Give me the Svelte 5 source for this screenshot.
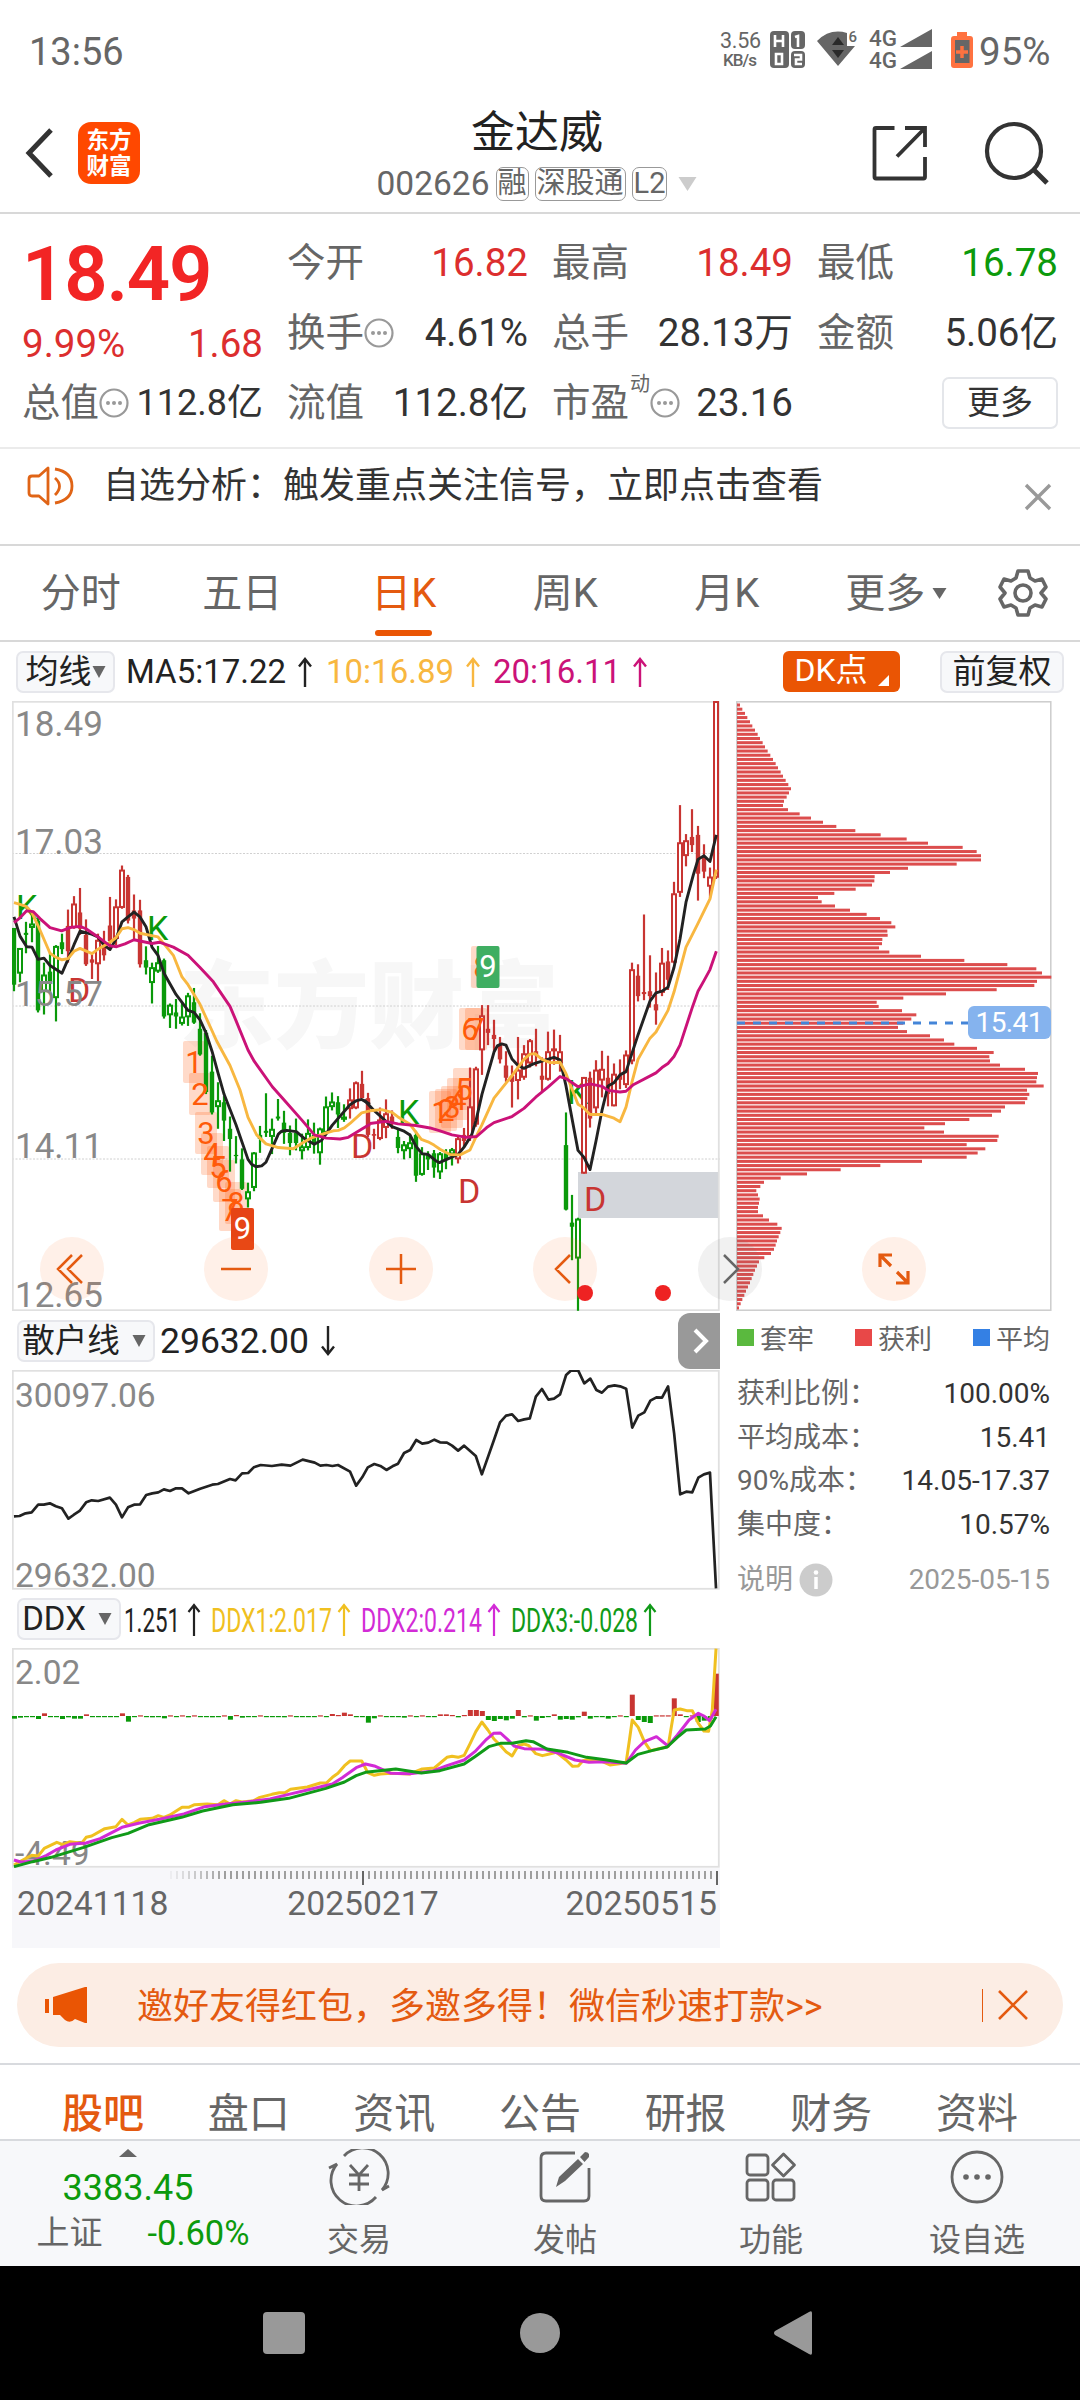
<script>
  // [high, low, bodyTop, bodyBottom, kind]  upper case = filled body, lower case = hollow
  const candles = [
    [583,738,583,722,'G'],[632,716,632,695,'g'],[568,645,595,600,'G'],[545,618,572,583,'g'],[556,790,565,785,'G'],
    [668,795,697,740,'g'],[644,740,690,715,'G'],[625,812,627,755,'g'],[597,647,618,635,'G'],[538,668,578,640,'R'],
    [505,585,523,583,'r'],[485,600,545,585,'R'],[562,676,600,672,'R'],[648,708,660,668,'R'],[597,713,612,672,'r'],
    [590,663,620,650,'R'],[507,635,577,615,'R'],[513,625,530,610,'r'],[430,536,440,534,'r'],[453,572,458,565,'R'],
    [501,612,540,560,'R'],[514,680,540,672,'R'],[628,697,662,680,'G'],[668,768,679,718,'g'],[627,693,667,690,'g'],
    [658,805,662,800,'G'],[768,828,771,797,'g'],[757,830,790,800,'G'],[765,822,800,818,'g'],[742,823,748,802,'g'],
    [730,818,765,815,'G'],[792,896,830,893,'G'],[833,990,840,985,'G'],[896,1040,935,1035,'G'],[961,1075,1005,1022,'g'],
    [995,1105,1010,1055,'G'],[1045,1180,1075,1100,'G'],[1093,1160,1139,1142,'G'],[1123,1225,1150,1222,'G'],[1207,1268,1228,1248,'g'],
    [1132,1228,1133,1220,'g'],[1068,1134,1090,1100,'G'],[988,1095,1080,1085,'G'],[1050,1137,1075,1095,'g'],[1002,1055,1045,1050,'G'],
    [1031,1112,1060,1085,'G'],[1067,1140,1085,1110,'G'],[1050,1128,1085,1110,'G'],[1087,1150,1118,1130,'g'],[1052,1128,1085,1122,'g'],
    [1060,1136,1090,1110,'G'],[1072,1163,1074,1135,'g'],[996,1090,1020,1085,'g'],[986,1030,1008,1022,'g'],[995,1073,1010,1040,'G'],
    [1015,1058,1045,1053,'g'],[976,1050,1003,1027,'r'],[959,1027,961,1025,'r'],[933,1000,965,1000,'R'],[987,1095,1000,1090,'R'],
    [1075,1125,1088,1092,'R'],[1023,1103,1052,1100,'r'],[1003,1098,1037,1073,'r'],[1030,1075,1045,1060,'R'],[1073,1135,1095,1122,'G'],
    [1105,1150,1113,1130,'g'],[1087,1147,1108,1125,'g'],[1080,1205,1090,1190,'G'],[1120,1190,1135,1188,'g'],[1130,1176,1140,1150,'G'],
    [1127,1195,1135,1170,'G'],[1132,1198,1135,1182,'g'],[1125,1174,1135,1150,'G'],[1122,1165,1125,1138,'g'],[1095,1160,1098,1150,'r'],
    [1073,1118,1090,1105,'R'],[925,1105,1020,1095,'r'],[923,1070,927,1065,'r'],[772,943,797,883,'r'],[772,870,830,840,'R'],
    [808,885,845,855,'R'],[850,915,868,905,'R'],[885,960,920,950,'R'],[920,1023,945,960,'R'],[850,1003,930,958,'r'],
    [870,955,890,950,'r'],[855,925,858,915,'r'],[830,922,885,895,'R'],[900,985,945,955,'R'],[837,957,885,955,'r'],
    [832,918,878,885,'r'],[845,935,885,915,'r'],[1035,1275,1115,1273,'G'],[1237,1397,1305,1315,'G'],[1293,1521,1295,1393,'g'],
    [948,1185,948,1185,'r'],[935,1072,950,1050,'R'],[907,1038,930,1025,'r'],[884,998,928,957,'r'],[896,1020,950,990,'R'],
    [915,1020,940,1020,'r'],[905,978,945,955,'R'],[883,975,893,968,'r'],[668,917,684,910,'r'],[672,763,700,750,'R'],
    [550,760,740,745,'R'],[650,778,738,750,'R'],[692,820,770,785,'R'],[632,750,668,742,'r'],[638,735,665,710,'R'],
    [470,670,498,668,'r'],[282,507,373,497,'r'],[353,432,368,407,'r'],[292,397,360,380,'R'],[333,516,355,450,'R'],
    [378,461,410,445,'R'],[435,510,457,482,'r'],[27,463,27,460,'r']
  ];
  const cy = (v) => v / 2.45 - 11;
  const color = (k) => (k.toLowerCase() === 'g' ? '#0a990a' : '#c83532');

  // moving averages, each split in an early and a late half
  const averages = [
    {
      color: '#222',
      early: '42,556 60,603 80,629 96,630 114,660 132,657 150,675 186,694 204,660 222,624 240,591 275,598 294,605 312,625 330,636 348,610 366,568 384,556 402,544 420,556 438,580 456,630 474,650 492,694 528,746 564,785 582,790 600,808 618,840 636,885 654,938 672,990 708,1065 744,1150 755,1162 768,1168 785,1166 798,1157 817,1122 835,1088 845,1081 860,1079 889,1082 918,1102 943,1113 965,1103 997,1066 1050,1016 1070,1006 1085,1003 1110,1015',
      late: '12,1004 42,1030 96,1070 130,1080 150,1090 168,1118 186,1136 204,1138 225,1152 238,1158 260,1150 294,1138 312,1120 335,1090 348,1055 366,990 402,887 412,872 425,867 438,870 456,904 474,920 492,927 520,916 546,909 582,900 600,906 618,970 636,1050 654,1128 672,1145 690,1175 708,1105 726,1030 744,970 762,962 780,943 798,935 834,845 870,762 888,742 906,738 924,728 942,680 960,610 978,520 1000,453 1014,415 1032,406 1050,420 1069,355'
    },
    {
      color: '#f8b740',
      early: '42,521 60,525 78,530 96,546 114,577 150,645 168,655 186,661 204,658 222,640 240,633 276,646 294,635 330,618 348,607 366,585 384,582 402,587 420,596 474,605 492,622 520,650 546,703 564,722 600,770 650,860 690,920 720,980 744,1047 770,1090 798,1112 835,1121 880,1124 907,1110 935,1097 979,1085 1000,1080 1015,1079 1033,1073 1050,1062 1085,1036 1110,1031',
      late: '30,1031 65,1028 96,1035 114,1046 150,1064 184,1101 204,1107 222,1115 240,1125 270,1138 300,1139 330,1127 348,1095 366,1065 402,1000 438,963 456,945 492,905 510,892 525,891 546,905 570,913 600,912 618,940 654,1015 670,1023 690,1040 726,1040 762,1049 780,1058 798,1022 816,960 834,905 870,853 888,838 924,785 942,740 978,630 1014,572 1050,512 1069,440'
    },
    {
      color: '#cb1278',
      early: '42,570 60,558 80,541 100,543 120,560 150,582 185,590 210,582 240,579 258,585 294,605 330,627 350,629 375,622 402,612 456,621 478,618 520,630 564,650 600,680 640,715 690,775 708,810 744,882 763,910 817,972 853,1005 907,1055 943,1090 979,1098 1020,1100 1045,1096 1087,1075 1110,1064',
      late: '30,1062 78,1057 114,1063 168,1067 210,1073 240,1080 276,1090 320,1096 350,1094 380,1072 402,1060 456,1045 492,1025 528,997 564,973 600,947 620,953 654,972 690,965 726,971 744,981 780,985 798,983 820,967 888,938 906,925 924,915 942,898 960,870 996,780 1014,738 1032,712 1050,685 1069,640'
    }
  ];

  // nine-turn marks: [x, y, digit]
  const marks = [
    [171,340,1],[177,372,2],[183,411,3],[189,432,4],[195,445,5],[201,459,6],[207,488,7],[213,481,8],
    [417,390,1],[423,388,2],[429,385,3],[435,377,4],[441,367,5],[447,307,6],[453,307,7],[459,245,8]
  ];
  const letters = [
    ['K',4,218],['D',56,301],['K',135,239],['D',339,457],['K',386,423],['D',446,502],['K',555,403],['D',572,510]
  ];
  const prices = [['18.49',35],['17.03',152.5],['15.57',305],['14.11',457],['12.65',606]];

  // chip distribution, right end of every bar
  const chips = [
    60,67,75,82,90,97,105,113,120,128,135,143,151,159,167,174,182,189,197,205,213,207,200,192,189,204,239,273,309,349,
    406,482,560,624,728,770,783,783,710,564,510,464,463,456,407,343,294,305,345,390,440,480,514,526,502,503,487,486,477,508,
    603,733,862,949,966,994,951,943,830,678,550,470,476,546,589,574,550,534,561,630,672,703,771,821,808,810,840,915,954,951,
    949,971,921,928,922,915,855,843,816,748,675,613,672,836,832,740,796,773,740,606,481,362,261,182,132,121,109,114,119,117,
    114,114,129,147,172,185,181,176,171,167,162,153,133,117,111,105,100,95,90,84,78,73,67,62,57
  ];

  const retail = '30,649 42,648 55,640 68,637 82,614 94,614 107,610 120,619 133,625 147,656 158,645 171,633 185,607 197,601 211,603 236,593 249,614 262,652 275,622 288,614 301,613 314,585 327,580 340,577 352,568 365,573 378,565 391,565 405,580 430,566 456,554 468,552 494,537 506,541 520,520 533,519 545,502 560,495 584,498 605,494 624,497 650,479 676,488 688,497 701,495 714,498 726,495 752,515 765,557 778,532 790,502 804,492 817,498 830,510 843,499 855,491 868,459 881,450 894,420 907,431 920,428 933,419 945,427 960,428 971,437 984,452 997,437 1022,468 1035,523 1061,420 1074,367 1087,347 1100,343 1113,363 1126,358 1138,355 1151,290 1164,267 1178,299 1190,296 1203,283 1216,225 1226,212 1242,212 1255,250 1268,236 1281,270 1293,278 1306,260 1320,256 1332,259 1345,266 1358,383 1371,347 1384,337 1397,302 1410,292 1422,293 1435,259 1448,400 1461,583 1474,575 1487,577 1500,533 1512,523 1525,518 1538,865';

  const ddxBars = [
    -8,-5,-3,-3,-9,8,-3,-3,-9,-4,-8,-8,5,-3,-3,-3,-3,-3,8,-17,-3,2,-3,-4,-3,-7,2,-3,2,-4,2,-3,-3,-4,-3,2,-11,3,-5,-3,
    -3,2,-3,-3,-3,-4,2,-3,-3,-3,-3,2,-3,6,3,10,5,-3,-3,-20,-7,2,-3,-3,-3,-5,2,-3,2,-3,-3,5,5,3,-4,3,18,18,15,-12,
    -15,-9,-13,-8,18,-4,2,-14,-6,-3,5,-11,-9,-11,-4,13,-8,-3,-3,-8,-3,2,-2,64,-12,-18,-21,2,2,2,53,5,-3,2,-18,-14,-8,127
  ];
  const ddxLines = [
    ['#f0c020', '30,795 45,783 68,766 82,768 95,745 122,727 135,734 150,725 175,730 185,712 197,708 225,686 249,680 262,658 275,675 288,668 301,658 327,655 340,647 352,652 365,645 391,622 405,622 418,614 445,612 468,614 481,602 494,612 507,602 520,606 545,602 558,592 584,583 600,578 612,578 624,568 660,561 688,549 701,549 714,532 726,520 740,497 752,483 777,483 790,518 804,526 817,522 840,520 880,522 907,507 933,504 960,472 971,469 984,472 997,466 1010,430 1022,395 1035,366 1048,390 1061,417 1074,435 1087,455 1100,468 1113,437 1126,432 1136,437 1151,461 1165,467 1180,462 1195,457 1216,480 1230,499 1242,498 1252,482 1268,478 1293,484 1310,495 1330,491 1345,487 1352,420 1358,360 1371,382 1384,425 1397,452 1420,445 1435,440 1448,330 1461,327 1475,332 1487,332 1500,370 1512,393 1522,394 1530,330 1538,146'],
    ['#d22bd6', '30,780 45,786 70,784 100,766 120,750 150,733 185,729 215,716 262,682 300,669 345,657 395,642 440,620 480,613 530,606 580,597 620,583 660,570 714,552 735,533 765,503 785,492 804,498 840,520 880,521 930,513 960,497 997,480 1020,455 1045,418 1060,400 1075,399 1090,418 1104,438 1126,446 1170,448 1200,460 1235,480 1265,487 1300,485 1345,490 1365,450 1384,425 1410,410 1435,438 1455,405 1480,360 1500,340 1512,348 1524,362 1538,328'],
    ['#109a18', '30,800 70,785 110,772 180,742 240,713 275,700 320,674 390,652 435,633 500,614 560,607 620,595 700,565 740,546 765,527 785,517 850,507 905,519 945,512 997,492 1020,470 1050,440 1075,430 1100,430 1130,422 1145,425 1175,447 1220,457 1260,472 1300,479 1345,489 1370,463 1400,452 1433,441 1455,412 1474,390 1515,387 1526,378 1538,350']
  ];
  const ticks = Array.from({ length: 92 }, (_, i) => 159 + i * 6);

  const stats = [
    ['获利比例：', '100.00%'],
    ['平均成本：', '15.41'],
    ['90%成本：', '14.05-17.37'],
    ['集中度：', '10.57%']
  ];
  const sections = ['股吧', '盘口', '资讯', '公告', '研报', '财务', '资料'];
</script>

{#snippet arrow(down)}
  <svg class="arrow" class:down width="16" height="32" viewBox="0 0 16 32"><path d="M8 31V3M2 10.500L8 3L14 10.500" fill="none" stroke="currentColor" stroke-width="2.400" /></svg>
{/snippet}

{#snippet more()}
  <svg class="more" width="30" height="30" viewBox="0 0 30 30"><circle cx="15" cy="15" r="13.500" fill="none" stroke="#999" stroke-width="2.200" /><circle cx="9" cy="15" r="2" fill="#999" /><circle cx="15" cy="15" r="2" fill="#999" /><circle cx="21" cy="15" r="2" fill="#999" /></svg>
{/snippet}

<div class="page">
  <div class="status">
    <span class="clock">13:56</span>
    <svg width="340" height="50" viewBox="715 25 340 50">
      <g fill="#666">
        <text x="740.500" y="48" font-size="21.500" text-anchor="middle" textLength="41">3.56</text>
        <text x="740" y="66" font-size="17" font-weight="500" text-anchor="middle" textLength="34">KB/s</text>
        <rect x="770" y="31" width="19" height="37" rx="4" />
        <rect x="791" y="31" width="14" height="18" rx="4" />
        <rect x="791" y="51" width="14" height="17" rx="4" />
        <path d="M838 66L817 41Q830 28 847 33V46H855Z" />
        <text x="848.500" y="42" font-size="15" font-weight="500">6</text>
        <text x="869" y="45.500" font-size="21.500" font-weight="500" textLength="28" lengthAdjust="spacingAndGlyphs">4G</text>
        <text x="869" y="67.500" font-size="21.500" font-weight="500" textLength="28" lengthAdjust="spacingAndGlyphs">4G</text>
        <path d="M932 29V47H900ZM932 51V69H900Z" />
      </g>
      <g fill="none" stroke="#fff" stroke-width="2.600">
        <path d="M775 35V47M783 35V47M775 41H783M776 54V64H782V54ZM795 37L798 36V47M794 55H801V59.500H796V64H802" />
      </g>
      <path d="M832 45L838 37L844 45ZM832 50L838 58L844 50Z" fill="#2a2a2a" />
      <path d="M957 32H967V36H970Q973 36 973 39V65Q973 68 970 68H954Q951 68 951 65V39Q951 36 954 36H957Z" fill="#ff7240" />
      <rect x="955" y="40" width="14.500" height="23" fill="#666" />
      <path d="M962 46V58M956 52H968" stroke="#ff7240" stroke-width="3.500" />
      <text x="979" y="65" font-size="38.500" fill="#666">95%</text>
    </svg>
  </div>

  <header>
    <div class="side">
      <svg width="30" height="52" viewBox="0 0 30 52"><path d="M27 3L5 26L27 49" fill="none" stroke="#333" stroke-width="5" /></svg>
      <div class="logo"><span>东方</span><span>财富</span></div>
    </div>
    <div class="title">
      <h1>金达威</h1>
      <div class="code">002626<i>融</i><i>深股通</i><i>L2</i><svg width="19" height="14" viewBox="0 0 18 14"><path d="M0 0H18L9 14Z" fill="#ccc" /></svg></div>
    </div>
    <div class="side right">
      <svg width="56" height="56" viewBox="872 124 56 56"><path d="M894.500 127H876Q874.500 127 874.500 128.500V176Q874.500 177.500 876 177.500H923.500Q925 177.500 925 176V156M905 127H925V146M924 128L897 155.500" fill="none" stroke="#333" stroke-width="3.800" /></svg>
      <svg width="66" height="66" viewBox="984 118 66 66"><circle cx="1014" cy="149" r="27" fill="none" stroke="#333" stroke-width="4.200" /><path d="M1033 167L1047 181" stroke="#333" stroke-width="5" /></svg>
    </div>
  </header>

  <section class="quote">
    <div class="big">18.49</div>
    <div class="cell"><label>今开</label><b class="red">16.82</b></div>
    <div class="cell"><label>最高</label><b class="red">18.49</b></div>
    <div class="cell"><label>最低</label><b class="green">16.78</b></div>
    <div class="cell change"><b class="red">9.99%</b><b class="red">1.68</b></div>
    <div class="cell"><label>换手</label>{@render more()}<b>4.61%</b></div>
    <div class="cell"><label>总手</label><b>28.13万</b></div>
    <div class="cell"><label>金额</label><b>5.06亿</b></div>
    <div class="cell tight"><label>总值</label>{@render more()}<b>112.8亿</b></div>
    <div class="cell"><label>流值</label><b>112.8亿</b></div>
    <div class="cell"><label>市盈</label><sup>动</sup>{@render more()}<b>23.16</b></div>
    <div class="cell"><button class="more-btn">更多</button></div>
  </section>

  <div class="notice">
    <svg width="50" height="40" viewBox="0 0 50 40"><g fill="none" stroke="#e06416" stroke-width="2.800"><path d="M21 2V38L12 30H5Q2 30 2 27V13Q2 10 5 10H12Z" stroke-linejoin="round" /><path d="M28 12Q37 20 28 29M28 3Q45 6 45 20Q45 34 28 37" /></g></svg>
    <span>自选分析：触发重点关注信号，立即点击查看</span>
    <svg class="close" width="28" height="28" viewBox="0 0 28 28"><path d="M2 2L26 26M26 2L2 26" stroke="#999" stroke-width="3.400" /></svg>
  </div>

  <nav class="periods">
    <span>分时</span><span>五日</span><span class="active">日K</span><span>周K</span><span>月K</span>
    <span class="drop">更多<svg width="15" height="11" viewBox="0 0 14 11"><path d="M0 0H14L7 11Z" fill="#666" /></svg></span>
    <svg class="gear" width="50" height="50" viewBox="-25 -25 50 50"><path d="M-5 -22H5L7 -15L12 -12L19 -14L23 -6L18 0L23 6L19 14L12 12L7 15L5 22H-5L-7 15L-12 12L-19 14L-23 6L-18 0L-23 -6L-19 -14L-12 -12L-7 -15Z" fill="none" stroke="#666" stroke-width="3.600" stroke-linejoin="round" /><circle r="8" fill="none" stroke="#666" stroke-width="3.600" /></svg>
  </nav>

  <div class="ma-row">
    <button class="pill ma">均线<svg width="14" height="12" viewBox="0 0 13 12"><path d="M0 0H13L6.500 12Z" fill="#666" /></svg></button>
    <span class="ma5">MA5:17.22{@render arrow(false)}</span>
    <span class="ma10">10:16.89{@render arrow(false)}</span>
    <span class="ma20">20:16.11{@render arrow(false)}</span>
    <button class="dk"><span>DK点</span><svg width="11" height="11" viewBox="0 0 11 11"><path d="M11 0V11H0Z" fill="#fff" /></svg></button>
    <button class="pill adj">前复权</button>
  </div>

  <div class="charts">
    <div class="left">
      <svg class="kline" width="708" height="610" viewBox="0 0 708 610">
        <text class="mark" x="167" y="340">东方财富</text>
        {#each [152.500, 305, 458] as y}
          <path d="M0 {y}H708" stroke="#d0d0d0" stroke-width="1" stroke-dasharray="2 1.500" />
        {/each}
        <rect x="566" y="471" width="141" height="46" fill="#d3d6db" />
        <rect x=".8" y=".8" width="706" height="608.400" fill="none" stroke="#e0e0e0" stroke-width="1.800" />
        {#each marks as [x, y]}
          <rect x={x} y={y} width="22" height="42" rx="2" fill="#ff6a28" fill-opacity=".25" />
        {/each}
        {#each letters as [c, x, y]}
          <text x={x} y={y} font-size="34" fill={c === 'K' ? '#0a990a' : '#c83532'}>{c}</text>
        {/each}
        {#each candles as [high, low, top, bottom, kind], i}
          <path d="M{2 + i * 6} {cy(high)}V{cy(low)}" stroke={color(kind)} stroke-width="2.200" />
          {#if kind === 'g' || kind === 'r'}
            <rect x={i * 6} y={cy(top) + 1} width="4" height={Math.max(1, cy(bottom) - cy(top) - 2)} fill="#fff" stroke={color(kind)} stroke-width="2" />
          {:else}
            <rect x={i * 6 - 0.2} y={cy(top)} width="4.400" height={cy(bottom) - cy(top)} fill={color(kind)} />
          {/if}
        {/each}
        {#each prices as [p, y]}
          <text x="3" y={y} font-size="35" fill="#888">{p}</text>
        {/each}
        {#each averages as ma}
          <g fill="none" stroke={ma.color} stroke-width="2.900" stroke-linejoin="round">
            <polyline points={ma.early} transform="translate(-12 -11) scale(.33333 .40816)" />
            <polyline points={ma.late} transform="translate(348 -11) scale(.33333 .40816)" />
          </g>
        {/each}
        {#each marks as [x, y, n]}
          <text x={x + 11} y={y + 32} font-size="31" text-anchor="middle" fill="#ff5a0a">{n}</text>
        {/each}
        <rect x="219" y="507" width="23" height="42" rx="2" fill="#e64415" />
        <text x="230.500" y="538" font-size="31" text-anchor="middle" fill="#fff">9</text>
        <rect x="464.500" y="245" width="23" height="42" rx="2" fill="#3fae62" />
        <text x="476" y="276" font-size="31" text-anchor="middle" fill="#fff">9</text>
      </svg>

      <div class="ind-row">
        <button class="pill wide">散户线<svg width="14" height="12" viewBox="0 0 13 12"><path d="M0 0H13L6.500 12Z" fill="#666" /></svg></button>
        <span class="ind-value">29632.00{@render arrow(true)}</span>
        <button class="expand"><svg width="20" height="28" viewBox="0 0 20 28"><path d="M6 3L17 14L6 25" fill="none" stroke="#fff" stroke-width="4" /></svg></button>
      </div>

      <svg class="sub" width="708" height="220" viewBox="0 0 708 220">
        <rect x=".8" y=".8" width="706" height="218" fill="none" stroke="#e0e0e0" stroke-width="1.800" />
        <text x="3" y="36.500" font-size="33.500" fill="#888">30097.06</text>
        <text x="3" y="217" font-size="33.500" fill="#888">29632.00</text>
        <polyline points={retail} transform="translate(-12 -70) scale(.46556 .33333)" fill="none" stroke="#222" stroke-width="2.700" stroke-linejoin="round" />
      </svg>

      <div class="ind-row ddx">
        <button class="pill">DDX<svg width="14" height="12" viewBox="0 0 13 12"><path d="M0 0H13L6.500 12Z" fill="#666" /></svg></button>
        <svg class="values" width="560" height="44" viewBox="120 1595 560 44" font-size="34">
          <g fill="#222"><text x="124" y="1630" textLength="56" lengthAdjust="spacingAndGlyphs">1.251</text><path d="M194 1634V1603M188.500 1610L194 1603L199.500 1610" stroke="#222" /></g>
          <g fill="#f0c020"><text x="211" y="1630" textLength="121" lengthAdjust="spacingAndGlyphs">DDX1:2.017</text><path d="M344 1634V1603M338.500 1610L344 1603L349.500 1610" stroke="#f0c020" /></g>
          <g fill="#d22bd6"><text x="361" y="1630" textLength="121" lengthAdjust="spacingAndGlyphs">DDX2:0.214</text><path d="M494 1634V1603M488.500 1610L494 1603L499.500 1610" stroke="#d22bd6" /></g>
          <g fill="#109a18"><text x="511" y="1630" textLength="127" lengthAdjust="spacingAndGlyphs">DDX3:-0.028</text><path d="M650 1634V1603M644.500 1610L650 1603L655.500 1610" stroke="#109a18" /></g>
        </svg>
      </div>

      <svg class="sub" width="708" height="220" viewBox="0 0 708 220">
        <rect x=".8" y=".8" width="706" height="218" fill="none" stroke="#e0e0e0" stroke-width="1.800" />
        {#each ddxBars as v, i}
          <rect x={i * 5.998} y={v > 0 ? 68 - v / 3 : 68} width="5" height={Math.max(1.2, Math.abs(v) / 3)} fill={v > 0 ? '#c83532' : '#0a990a'} />
        {/each}
        <text x="3" y="36" font-size="33.500" fill="#888">2.02</text>
        <text x="3" y="217" font-size="33.500" fill="#888">-4.49</text>
        {#each ddxLines as [stroke, points]}
          <polyline points={points} transform="translate(-12 -48) scale(.46556 .33333)" fill="none" stroke={stroke} stroke-width="3" stroke-linejoin="round" />
        {/each}
      </svg>

      <div class="axis">
        <svg width="708" height="20" viewBox="0 0 708 20">
          {#each ticks as x, i}
            <path d="M{x} 3V11" stroke="#888" stroke-width="1.600" opacity={Math.min(1, (i + 1) / 10)} />
          {/each}
          <path d="M351 3V17M705 3V17" stroke="#666" stroke-width="2" />
        </svg>
        <div class="dates"><span>20241118</span><span>20250217</span><span>20250515</span></div>
      </div>
    </div>

    <div class="chips">
      <svg width="316" height="610" viewBox="0 0 316 610">
        <rect x=".8" y=".8" width="314" height="608.400" fill="none" stroke="#ccc" stroke-width="1.500" />
        {#each chips as c, i}
          <rect x="1" y={2.5 + i * 4.187} width={(c - 51) / 3} height="3" fill="#dc4d4d" />
        {/each}
        <path d="M1 322H232" stroke="#4485d8" stroke-width="2.800" stroke-dasharray="8 8" />
        <rect x="232" y="305" width="83" height="33" rx="6" fill="#85b3ee" />
        <text x="273.500" y="331" font-size="28" text-anchor="middle" fill="#fff" textLength="68">15.41</text>
      </svg>
      <div class="legend"><span class="lose">套牢</span><span class="win">获利</span><span class="avg">平均</span></div>
      {#each stats as [name, value]}
        <div class="stat"><span>{name}</span><b>{value}</b></div>
      {/each}
      <div class="stat note">
        <span>说明<svg width="34" height="34" viewBox="0 0 34 34"><circle cx="17" cy="17" r="16.500" fill="#ccc" /><path d="M17 14V26" stroke="#fff" stroke-width="3.500" /><circle cx="17" cy="9.500" r="2.300" fill="#fff" /></svg></span>
        <em>2025-05-15</em>
      </div>
    </div>

    <svg class="controls" width="1080" height="90" viewBox="0 1235 1080 90">
      <g fill="#ff6a20" fill-opacity=".1"><circle cx="72" cy="1269" r="32" /><circle cx="236" cy="1269" r="32" /><circle cx="401" cy="1269" r="32" /><circle cx="565" cy="1269" r="32" /><circle cx="894" cy="1269" r="32" /></g>
      <circle cx="730" cy="1269" r="32" fill="#777" fill-opacity=".1" />
      <g fill="none" stroke="#e45a10" stroke-width="2.500">
        <path d="M72 1255L58 1269L72 1283M82 1255L68 1269L82 1283M221 1269H251M386 1269H416M401 1254V1284M570 1255L556 1269L570 1283" />
        <path d="M880 1267V1255H892M880 1255L891 1266M908 1271V1283H896M908 1283L897 1272" stroke-width="3.200" />
      </g>
      <path d="M724 1255L738 1269L724 1283" fill="none" stroke="#666" stroke-width="2.500" />
      <circle cx="585" cy="1293" r="8" fill="#ee2222" />
      <circle cx="663" cy="1293" r="8" fill="#ee2222" />
    </svg>
  </div>

  <div class="promo">
    <svg width="44" height="38" viewBox="0 0 44 38"><path d="M0 13H4V27H0ZM8 11L40 1H42V37H40L30 33Q25 38 20 34L15 29H8Z" fill="#ea5504" /></svg>
    <span>邀好友得红包，多邀多得！微信秒速打款&gt;&gt;</span>
    <i></i>
    <svg width="32" height="32" viewBox="0 0 32 32"><path d="M2 2L30 30M30 2L2 30" stroke="#e45a10" stroke-width="2.600" /></svg>
  </div>

  <nav class="sections">
    {#each sections as s, i}
      <span class:active={i === 0}>{s}</span>
    {/each}
  </nav>

  <footer>
    <div class="index">
      <svg width="18" height="8" viewBox="0 0 18 8"><path d="M0 8L9 0L18 8Z" fill="#666" /></svg>
      <strong>3383.45</strong>
      <div><span>上证</span><b>-0.60%</b></div>
    </div>
    <div class="tool">
      <svg width="62" height="56" viewBox="0 0 62 56"><g fill="none" stroke="#666" stroke-width="2.800"><path d="M16 7A25.500 25.500 0 0 1 54 41L61 37M48 48A25.500 25.500 0 0 1 9 15L1 19" stroke-linejoin="bevel" /><path d="M22 16L31 26L40 16M31 26V42M21 26H41M21 35H41" /></g></svg>
      <span>交易</span>
    </div>
    <div class="tool">
      <svg width="62" height="56" viewBox="0 0 62 56"><path d="M41 4H12Q7 4 7 9V47Q7 52 12 52H50Q55 52 55 47V19" fill="none" stroke="#666" stroke-width="2.800" /><path d="M22 38L25 28L44 10L49 15L31 32ZM46 8L51 3Q54 3 55 5V8L50.500 13Z" fill="#666" /></svg>
      <span>发帖</span>
    </div>
    <div class="tool">
      <svg width="62" height="56" viewBox="0 0 62 56"><g fill="none" stroke="#666" stroke-width="2.800"><rect x="7" y="6" width="21" height="20" rx="3" /><rect x="7" y="31" width="21" height="20" rx="3" /><rect x="33" y="31" width="21" height="20" rx="3" /><path d="M43.500 5L54.500 16L43.500 27L32.500 16Z" stroke-linejoin="round" /></g></svg>
      <span>功能</span>
    </div>
    <div class="tool">
      <svg width="62" height="56" viewBox="0 0 62 56"><circle cx="31" cy="28" r="25" fill="none" stroke="#666" stroke-width="2.800" /><g fill="#666"><circle cx="20" cy="28" r="2.800" /><circle cx="31" cy="28" r="2.800" /><circle cx="42" cy="28" r="2.800" /></g></svg>
      <span>设自选</span>
    </div>
  </footer>

  <div class="system">
    <svg width="1080" height="134" viewBox="0 0 1080 134"><g fill="#999"><rect x="263" y="46" width="42" height="42" rx="4" /><circle cx="540" cy="67" r="20" /><path d="M812 47V87Q812 90 809 88L775 69Q773 67 775 65L809 46Q812 44 812 47Z" /></g></svg>
  </div>
</div>

<style>
  :global(body) {
    margin: 0;
    background: #fff;
  }

  .page {
    width: 1080px;
    height: 2400px;
    overflow: hidden;
    display: flex;
    flex-direction: column;
    font-family: Roboto, 'Noto Sans CJK SC', sans-serif;
    color: #333;
    background: #fff;
  }

  .page > * {
    flex: none;
    box-sizing: border-box;
  }

  svg {
    display: block;
    flex: none;
  }

  svg polyline {
    vector-effect: non-scaling-stroke;
  }

  button {
    font: inherit;
    color: inherit;
    padding: 0;
    box-sizing: border-box;
    display: flex;
    align-items: center;
    justify-content: center;
    white-space: nowrap;
  }

  b, em, i {
    font-weight: 400;
    font-style: normal;
  }

  .status {
    height: 104px;
    padding: 25px 25px 0 29px;
    display: flex;
    justify-content: space-between;
  }

  .clock {
    font-size: 38px;
    line-height: 54px;
    color: #666;
  }

  header {
    height: 110px;
    border-bottom: 2px solid #d8d8d8;
    padding: 0 30px 0 24px;
    display: flex;
    justify-content: space-between;
  }

  .side {
    width: 230px;
    display: flex;
    align-items: center;
    padding-bottom: 14px;
    gap: 24px;
    height: 111px;
    box-sizing: border-box;
  }

  .side.right {
    justify-content: flex-end;
    gap: 56px;
  }

  .logo {
    width: 62px;
    height: 62px;
    border-radius: 13px;
    background: #ff4800;
    color: #fff;
    font-size: 22.5px;
    font-weight: 700;
    line-height: 26px;
    display: flex;
    flex-direction: column;
    align-items: center;
    justify-content: center;
  }

  .title {
    text-align: center;
  }

  h1 {
    margin: 0;
    font-size: 44px;
    font-weight: 400;
    line-height: 58px;
    color: #222;
  }

  .code {
    display: flex;
    align-items: center;
    justify-content: center;
    font-size: 33.5px;
    line-height: 34px;
    color: #666;
    margin-top: 5px;
  }

  .code i {
    height: 32px;
    line-height: 31px;
    border: 1.5px solid #999;
    border-radius: 7px;
    font-size: 29px;
    padding: 0 1px;
    margin-left: 6px;
  }

  .code svg {
    margin-left: 11px;
  }

  .quote {
    height: 233px;
    padding: 14px 22px 0;
    display: grid;
    grid-template-columns: repeat(4, 1fr);
    grid-template-rows: repeat(3, 70px);
    column-gap: 24px;
  }

  .big {
    font-size: 76px;
    font-weight: 600;
    line-height: 92px;
    letter-spacing: -1.2px;
    color: #f22525;
  }

  .cell {
    display: flex;
    align-items: center;
    font-size: 38.5px;
    line-height: 50px;
    white-space: nowrap;
  }

  .cell label {
    color: #666;
  }

  .cell b {
    margin-left: auto;
  }

  .cell.change {
    padding-top: 22px;
  }

  .cell.change b:first-child {
    margin-left: 0;
  }

  .cell.tight b {
    font-size: 36px;
  }

  .cell sup {
    font-size: 20px;
    color: #666;
    line-height: 20px;
    margin: -38px 0 0 1px;
    vertical-align: baseline;
  }

  .cell b.red {
    color: #dc2e2e;
  }

  .cell b.green {
    color: #0c9a0c;
  }

  .more-btn {
    margin-left: auto;
    width: 116px;
    height: 52px;
    border: 2px solid #e4e6ea;
    border-radius: 7px;
    background: #fff;
    font-size: 33px;
  }

  .notice {
    height: 99px;
    border-top: 2px solid #ebebeb;
    border-bottom: 2px solid #d8d8d8;
    padding: 0 28px 22px 27px;
    display: flex;
    align-items: center;
    font-size: 36px;
    line-height: 50px;
  }

  .notice span {
    margin-left: 26px;
    flex: 1;
  }

  .notice .close {
    margin-top: 22px;
  }

  .periods {
    height: 96px;
    border-bottom: 2px solid #d8d8d8;
    padding-right: 32px;
    display: flex;
    align-items: center;
    font-size: 40px;
    color: #666;
  }

  .periods span {
    width: 161.5px;
    height: 90px;
    line-height: 91px;
    text-align: center;
    box-sizing: border-box;
  }

  .periods .active {
    color: #e45a10;
    position: relative;
  }

  .periods .active::after {
    content: '';
    position: absolute;
    left: 52px;
    right: 53px;
    bottom: 2px;
    height: 6px;
    border-radius: 3px;
    background: #ea5504;
  }

  .periods .drop {
    display: flex;
    align-items: center;
    justify-content: center;
    gap: 7px;
    padding-left: 16px;
  }

  .gear {
    margin-left: auto;
  }

  .pill {
    height: 42px;
    border: 2px solid #e6e7ec;
    border-radius: 7px;
    background: #f7f8fa;
    color: #222;
    font-size: 33px;
    line-height: 38px;
  }

  .ma-row {
    height: 59px;
    padding: 0 16px;
    display: flex;
    align-items: center;
    font-size: 33px;
  }

  .pill.ma {
    width: 99px;
  }

  .ma-row > span {
    display: flex;
    align-items: center;
    gap: 11px;
  }

  .ma5 {
    width: 200px;
    margin-left: 11px;
    color: #222;
  }

  .ma10 {
    width: 167px;
    color: #f8b740;
  }

  .ma20 {
    color: #cb1278;
  }

  .arrow.down {
    transform: rotate(180deg);
  }

  .dk {
    width: 117px;
    height: 41px;
    margin-left: auto;
    border: 0;
    border-radius: 6px;
    background: #ea5504;
    color: #fff;
    font-size: 32px;
    line-height: 36px;
    gap: 10px;
  }

  .dk span {
    margin-top: -4px;
  }

  .dk svg {
    align-self: flex-end;
    margin-bottom: 6px;
  }

  .pill.adj {
    width: 124px;
    margin-left: 40px;
  }

  .charts {
    position: relative;
    height: 1247px;
    display: flex;
    padding-left: 12px;
    gap: 16px;
  }

  .left {
    width: 708px;
  }

  .mark {
    font-size: 95px;
    font-weight: 900;
    fill: #f7f7f7;
  }

  .ind-row {
    height: 59px;
    display: flex;
    align-items: center;
    padding-left: 5px;
  }

  .ind-row .pill {
    width: 104px;
    gap: 12px;
    padding-right: 4px;
  }

  .ind-row .pill.wide {
    width: 138px;
    font-size: 32.5px;
  }

  .ind-value {
    display: flex;
    align-items: center;
    gap: 11px;
    margin-left: 5px;
    font-size: 35.5px;
    color: #222;
  }

  .expand {
    width: 42px;
    height: 56px;
    margin-left: auto;
    border: 0;
    border-radius: 12px 0 0 12px;
    background: #999;
  }

  .ind-row.ddx {
    height: 58px;
  }

  .values {
    margin-left: -1px;
  }

  .values path {
    fill: none;
    stroke-width: 2.2;
  }

  .axis {
    height: 80px;
    background: #f7f7fa;
  }

  .dates {
    display: flex;
    justify-content: space-between;
    padding: 0 3px 0 5px;
    font-size: 33.7px;
    line-height: 32px;
    color: #666;
  }

  .dates span:nth-child(2) {
    margin-right: 8px;
  }

  .chips {
    width: 316px;
  }

  .legend {
    display: flex;
    justify-content: space-between;
    height: 52px;
    align-items: center;
    font-size: 27px;
    color: #666;
    margin-bottom: 9px;
    padding: 0 2px 0 1px;
  }

  .legend span {
    display: flex;
    align-items: center;
    gap: 6px;
  }

  .legend span::before {
    content: '';
    width: 17px;
    height: 17px;
    background: #5ab93e;
  }

  .legend .win::before {
    background: #e84848;
  }

  .legend .avg::before {
    background: #3480e4;
  }

  .stat {
    display: flex;
    justify-content: space-between;
    align-items: center;
    height: 43.7px;
    padding: 0 2px 0 1px;
    font-size: 28px;
    line-height: 40px;
    color: #666;
  }

  .stat b {
    color: #333;
  }

  .stat.note {
    margin-top: 11px;
    color: #999;
  }

  .stat.note span {
    display: flex;
    align-items: center;
    gap: 6px;
  }

  .controls {
    position: absolute;
    left: 0;
    top: 534px;
  }

  .promo {
    height: 84px;
    margin: 15px 17px 16px;
    border-radius: 42px;
    background: #fcede4;
    padding: 0 34px 0 28px;
    display: flex;
    align-items: center;
    font-size: 36px;
    color: #e45a10;
  }

  .promo span {
    margin: -5px 0 0 48px;
    flex: 1;
  }

  .promo i {
    width: 1.5px;
    height: 33px;
    margin-right: 14px;
    background: #e45a10;
  }

  .sections {
    height: 76px;
    border-top: 2px solid #d8dade;
    padding: 0 62px;
    display: flex;
    justify-content: space-between;
    font-size: 41px;
    line-height: 98px;
    color: #666;
  }

  .sections .active {
    color: #e45a10;
    font-weight: 500;
  }

  footer {
    height: 127px;
    border-top: 2px solid #d8dade;
    background: #f7f8fa;
    display: flex;
    color: #666;
  }

  .index {
    width: 256px;
    padding-top: 8px;
    box-sizing: border-box;
    display: flex;
    flex-direction: column;
    align-items: center;
  }

  .index strong {
    font-size: 36px;
    font-weight: 400;
    line-height: 46px;
    margin-top: 8px;
    color: #0c9a0c;
  }

  .index div {
    display: flex;
    align-items: center;
    justify-content: center;
    gap: 45px;
    font-size: 33px;
    line-height: 44px;
    width: 100%;
    margin-left: 30px;
  }

  .index b {
    font-size: 34.5px;
    color: #0c9a0c;
  }

  .tool {
    width: 206px;
    padding-top: 8px;
    display: flex;
    flex-direction: column;
    align-items: center;
    font-size: 32px;
    line-height: 44px;
  }

  .tool span {
    margin-top: 13px;
  }

  .system {
    height: 134px;
    background: #000;
  }
</style>
